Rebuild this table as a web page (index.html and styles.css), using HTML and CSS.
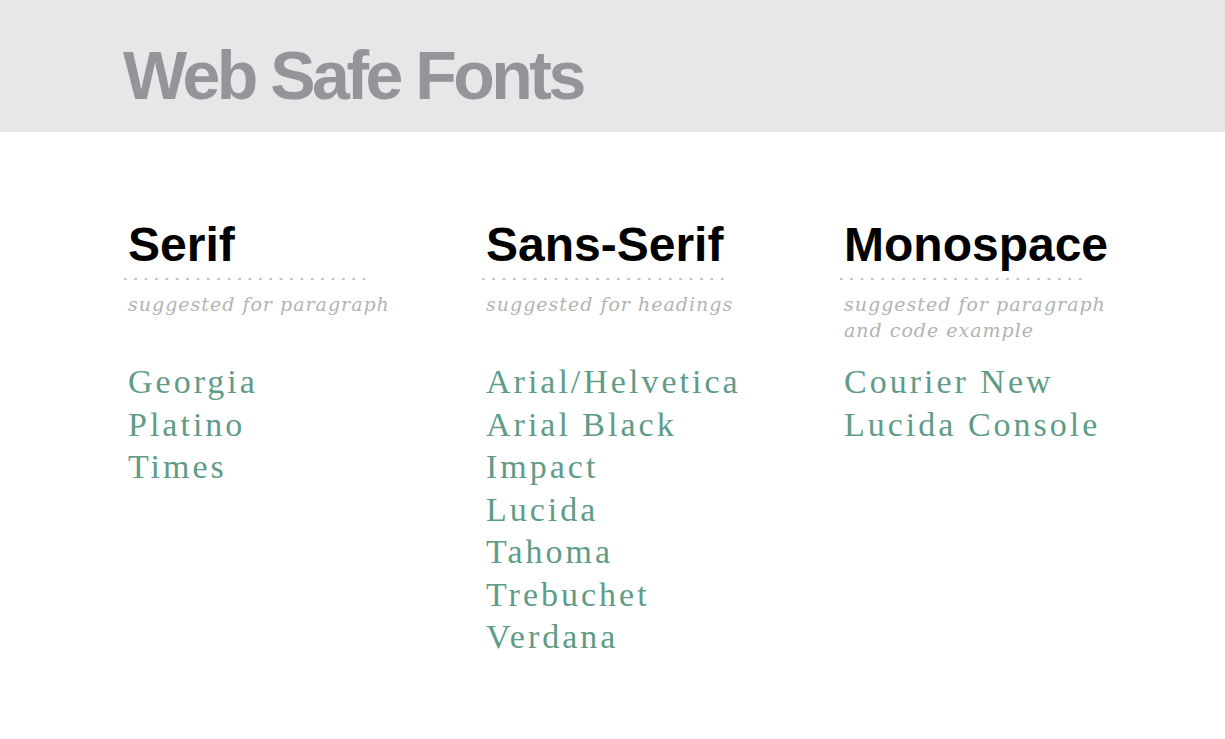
FILE: index.html
```html
<!DOCTYPE html>
<html>
<head>
<meta charset="utf-8">
<link rel="stylesheet" href="styles.css">
</head>
<body>
<header class="banner">
  <h1 class="title">Web Safe Fonts</h1>
</header>
<main class="columns">
  <section class="col">
    <h2 class="col-head">Serif</h2>
    <div class="dots"></div>
    <p class="note">suggested for paragraph</p>
    <ul class="fonts">
      <li>Georgia</li>
      <li>Platino</li>
      <li>Times</li>
    </ul>
  </section>
  <section class="col">
    <h2 class="col-head">Sans-Serif</h2>
    <div class="dots"></div>
    <p class="note">suggested for headings</p>
    <ul class="fonts">
      <li>Arial/Helvetica</li>
      <li>Arial Black</li>
      <li>Impact</li>
      <li>Lucida</li>
      <li>Tahoma</li>
      <li>Trebuchet</li>
      <li>Verdana</li>
    </ul>
  </section>
  <section class="col">
    <h2 class="col-head">Monospace</h2>
    <div class="dots"></div>
    <p class="note">suggested for paragraph<br>and code example</p>
    <ul class="fonts">
      <li>Courier New</li>
      <li>Lucida Console</li>
    </ul>
  </section>
</main>
</body>
</html>
```
FILE: styles.css
```css
html, body {
  margin: 0;
  padding: 0;
  background: #ffffff;
}
body {
  width: 1225px;
  height: 739px;
  overflow: hidden;
}
.banner {
  height: 132px;
  background: #e6e7e8;
  padding-left: 123px;
  padding-top: 37px;
  box-sizing: border-box;
}
.title {
  margin: 0;
  font-family: "Liberation Sans", Arial, sans-serif;
  font-weight: bold;
  font-size: 68px;
  letter-spacing: -3.5px;
  color: #939598;
  line-height: 76px;
}
.columns {
  display: flex;
  padding-left: 124px;
  padding-top: 86px;
}
.col {
  width: 358px;
}
.col-head {
  margin: 0 0 0 4px;
  font-family: "Liberation Sans", Arial, sans-serif;
  font-weight: bold;
  font-size: 48px;
  letter-spacing: 0;
  line-height: 54px;
  color: #000;
}
.dots {
  width: 244px;
  height: 4px;
  margin-top: 5px;
  background-image: radial-gradient(circle, #c4c4c4 1.1px, transparent 1.5px);
  background-size: 10.4px 4px;
  background-position: -4px 0;
  background-repeat: repeat-x;
}
.note {
  margin: 10px 0 0 4px;
  font-family: "DejaVu Serif", Georgia, serif;
  font-style: italic;
  font-size: 19px;
  letter-spacing: 1px;
  line-height: 26px;
  color: #b3b3b3;
  height: 52px;
}
.fonts {
  list-style: none;
  margin: 18px 0 0 4px;
  padding: 0;
  font-family: "Liberation Serif", Georgia, serif;
  font-size: 34px;
  letter-spacing: 3px;
  line-height: 42.5px;
  color: #5f9c87;
}
```
